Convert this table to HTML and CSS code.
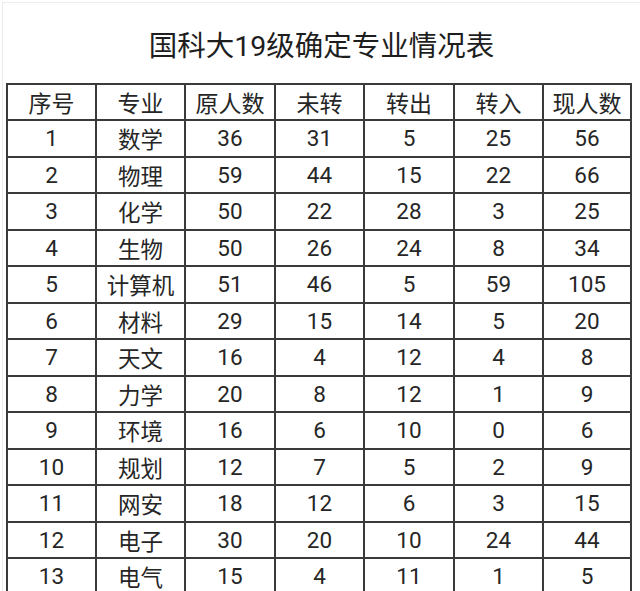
FILE: index.html
```html
<!DOCTYPE html>
<html lang="zh">
<head>
<meta charset="utf-8">
<link rel="stylesheet" href="styles.css">
</head>
<body>
<div class="frame">
  <h1 class="title">国科大19级确定专业情况表</h1>
  <table class="sheet">
    <colgroup>
      <col class="c1"><col class="c2"><col class="c3"><col class="c4"><col class="c5"><col class="c6"><col class="c7">
    </colgroup>
    <thead>
      <tr><th>序号</th><th>专业</th><th>原人数</th><th>未转</th><th>转出</th><th>转入</th><th>现人数</th></tr>
    </thead>
    <tbody>
      <tr><td>1</td><td>数学</td><td>36</td><td>31</td><td>5</td><td>25</td><td>56</td></tr>
      <tr><td>2</td><td>物理</td><td>59</td><td>44</td><td>15</td><td>22</td><td>66</td></tr>
      <tr><td>3</td><td>化学</td><td>50</td><td>22</td><td>28</td><td>3</td><td>25</td></tr>
      <tr><td>4</td><td>生物</td><td>50</td><td>26</td><td>24</td><td>8</td><td>34</td></tr>
      <tr><td>5</td><td>计算机</td><td>51</td><td>46</td><td>5</td><td>59</td><td>105</td></tr>
      <tr><td>6</td><td>材料</td><td>29</td><td>15</td><td>14</td><td>5</td><td>20</td></tr>
      <tr><td>7</td><td>天文</td><td>16</td><td>4</td><td>12</td><td>4</td><td>8</td></tr>
      <tr><td>8</td><td>力学</td><td>20</td><td>8</td><td>12</td><td>1</td><td>9</td></tr>
      <tr><td>9</td><td>环境</td><td>16</td><td>6</td><td>10</td><td>0</td><td>6</td></tr>
      <tr><td>10</td><td>规划</td><td>12</td><td>7</td><td>5</td><td>2</td><td>9</td></tr>
      <tr><td>11</td><td>网安</td><td>18</td><td>12</td><td>6</td><td>3</td><td>15</td></tr>
      <tr><td>12</td><td>电子</td><td>30</td><td>20</td><td>10</td><td>24</td><td>44</td></tr>
      <tr><td>13</td><td>电气</td><td>15</td><td>4</td><td>11</td><td>1</td><td>5</td></tr>
    </tbody>
  </table>
</div>
</body>
</html>
```
FILE: styles.css
```css
html, body {
  margin: 0;
  padding: 0;
  background: #ffffff;
}
body {
  font-family: Roboto, "Noto Sans CJK SC", sans-serif;
  color: #222222;
  overflow: hidden;
}
.frame {
  margin: 2px 0 0 2px;
  border-top: 1px solid #ececec;
  border-left: 1px solid #ececec;
  padding: 0 0 0 3px;
  height: 640px;
}
.title {
  margin: 0;
  height: 80px;
  line-height: 88px;
  font-size: 28.5px;
  font-weight: 400;
  text-align: center;
  padding-right: 3px;
  color: #1e1e1e;
  overflow: visible;
}
.sheet {
  border-collapse: collapse;
  table-layout: fixed;
  width: 626px;
}
.c1, .c2, .c4, .c6 { width: 89px; }
.c3, .c5 { width: 90px; }
.c7 { width: 88px; }
.sheet th, .sheet td {
  border: 2px solid #3a3a3a;
  padding: 0;
  text-align: center;
  font-weight: 400;
  font-size: 22.5px;
  color: #262626;
}
.sheet th {
  height: 34px;
  font-size: 23px;
}
.sheet td {
  height: 34.5px;
}
```
